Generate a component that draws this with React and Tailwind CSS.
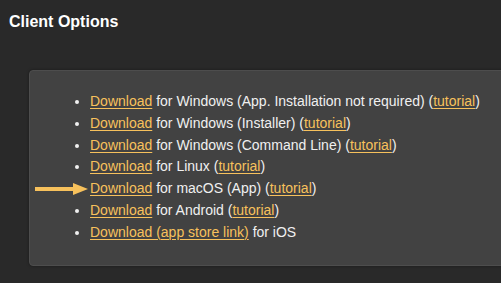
export default function App() {
  const link = "text-[#f7c15c] underline underline-offset-[2px] decoration-1";
  const rows = [
    { pre: "Download", text: " for Windows (App. Installation not required) (", tut: true },
    { pre: "Download", text: " for Windows (Installer) (", tut: true },
    { pre: "Download", text: " for Windows (Command Line) (", tut: true },
    { pre: "Download", text: " for Linux (", tut: true },
    { pre: "Download", text: " for macOS (App) (", tut: true, arrow: true },
    { pre: "Download", text: " for Android (", tut: true },
  ];
  return (
    <div className="w-[501px] h-[283px] overflow-hidden bg-[#292929] font-['Liberation_Sans',Arial,sans-serif]">
      <h2 className="pt-[12px] pl-[9px] text-[16px] leading-[20px] font-bold text-white">Client Options</h2>
      <div className="ml-[29px] mt-[38px] w-[500px] rounded-[4px] border border-[#4d4d4d] bg-[#424242] pt-[20px] pb-[21px] pl-[20px] shadow-[0_0_3px_rgba(0,0,0,0.4)]">
        <ul className="list-disc pl-[40px] text-[14px] leading-[21.8px] text-[#f0f0f0] marker:text-[#f0f0f0]">
          {rows.map((r, i) => (
            <li key={i} className={r.arrow ? "relative list-none" : ""}>
              {r.arrow && (
                <svg className="absolute left-[-55px] top-[5px]" width="53" height="12" viewBox="0 0 53 12">
                  <rect x="0" y="4" width="40" height="4" fill="#f7c15c" />
                  <polygon points="38,0 53,6 38,12" fill="#f7c15c" />
                </svg>
              )}
              <a className={link}>{r.pre}</a>
              {r.text}
              <a className={link}>tutorial</a>)
            </li>
          ))}
          <li>
            <a className={link}>Download (app store link)</a> for iOS
          </li>
        </ul>
      </div>
    </div>
  );
}
